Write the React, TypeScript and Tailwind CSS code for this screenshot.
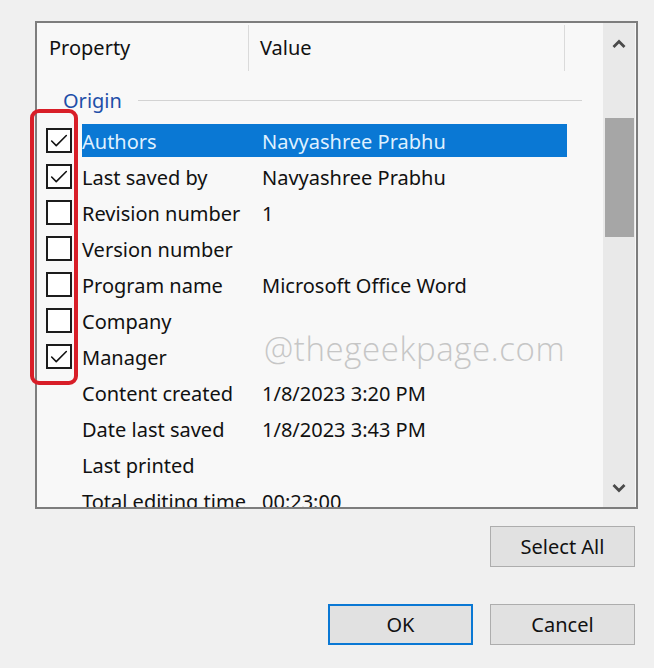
import { Check } from 'lucide-react'

type Row = {
  label: string
  value?: string
  checked?: boolean
  selected?: boolean
  box: boolean
}

const rows: Row[] = [
  { label: 'Authors', value: 'Navyashree Prabhu', checked: true, selected: true, box: true },
  { label: 'Last saved by', value: 'Navyashree Prabhu', checked: true, box: true },
  { label: 'Revision number', value: '1', box: true },
  { label: 'Version number', box: true },
  { label: 'Program name', value: 'Microsoft Office Word', box: true },
  { label: 'Company', box: true },
  { label: 'Manager', checked: true, box: true },
  { label: 'Content created', value: '1/8/2023 3:20 PM', box: false },
  { label: 'Date last saved', value: '1/8/2023 3:43 PM', box: false },
  { label: 'Last printed', box: false },
  { label: 'Total editing time', value: '00:23:00', box: false },
]

function Chevron({ down }: { down?: boolean }) {
  return (
    <svg width="14" height="10" viewBox="0 0 14 10" className={down ? 'rotate-180' : ''}>
      <path d="M1.5 8 L7 2.5 L12.5 8" fill="none" stroke="#4a4a4a" strokeWidth="2.8" />
    </svg>
  )
}

export default function App() {
  return (
    <div
      className="relative w-[654px] h-[668px] bg-[#f0f0f0] text-[20px] text-[#111] overflow-hidden"
      style={{ fontFamily: '"Noto Sans", "Open Sans", sans-serif' }}
    >
      <div className="pt-[21px] pl-[35px]">
        {/* list box */}
        <div className="w-[603px] h-[488px] border-2 border-[#7d7d7d] bg-[#f8f8f8] flex overflow-hidden">
          <div className="flex-1 overflow-hidden">
            {/* header */}
            <div className="flex h-[50px] items-center">
              <div className="w-[212px] pl-[12px] h-[46px] flex items-center border-r border-[#dadada]">Property</div>
              <div className="w-[316px] pl-[11px] h-[46px] flex items-center border-r border-[#dadada]">Value</div>
            </div>

            {/* group */}
            <div className="flex items-center h-[51px] pl-[26px] pr-[21px]">
              <span className="text-[#1e4fa8] mt-[4px]">Origin</span>
              <div className="flex-1 ml-[16px] h-px bg-[#d3d3d3] mt-[3px]" />
            </div>

            {rows.map((r) => (
              <div key={r.label} className="flex h-9 items-start whitespace-nowrap">
                <div className="w-[45px] h-[33px] flex items-center pl-[9px]">
                  {r.box && (
                    <div className="w-[26px] h-[25px] border-2 border-[#1c1c1c] bg-white flex items-center justify-center">
                      {r.checked && <Check size={22} strokeWidth={1.7} color="#111" />}
                    </div>
                  )}
                </div>
                <div
                  className={`flex h-[33px] items-center w-[485px] ${
                    r.selected ? 'bg-[#0a78d4] text-[#dff0ff]' : ''
                  }`}
                >
                  <div className="w-[180px] mt-[2px]">{r.label}</div>
                  <div className="mt-[2px]">{r.value}</div>
                </div>
              </div>
            ))}
          </div>

          {/* scrollbar */}
          <div className="w-[32px] bg-[#e9e9e9] flex flex-col items-center mr-px">
            <div className="h-[37px] pt-[16px] flex justify-center">
              <Chevron />
            </div>
            <div className="w-[29px] h-[119px] mt-[58px] bg-[#a6a6a6]" />
            <div className="flex-1" />
            <div className="pb-[14px]">
              <Chevron down />
            </div>
          </div>
        </div>
      </div>

      {/* buttons */}
      <div className="flex justify-end pr-[19px] mt-[17px]">
        <button className="w-[145px] h-[41px] bg-[#e1e1e1] border border-[#adadad]">Select All</button>
      </div>
      <div className="flex justify-end gap-[17px] pr-[19px] mt-[37px]">
        <button className="w-[145px] h-[41px] bg-[#e1e1e1] border-2 border-[#0a78d4]">OK</button>
        <button className="w-[145px] h-[41px] bg-[#e1e1e1] border border-[#adadad]">Cancel</button>
      </div>

      {/* annotation + watermark overlays */}
      <div className="absolute left-[30px] top-[109px] w-[48px] h-[276px] border-[4px] border-[#d81e28] rounded-[9px]" />
      <div
        className="absolute left-[264px] top-[324px] text-[33px] font-light text-[#c6c6c6] tracking-[0.6px]"
        style={{ fontFamily: '"Open Sans", sans-serif' }}
      >
        @thegeekpage.com
      </div>
    </div>
  )
}
